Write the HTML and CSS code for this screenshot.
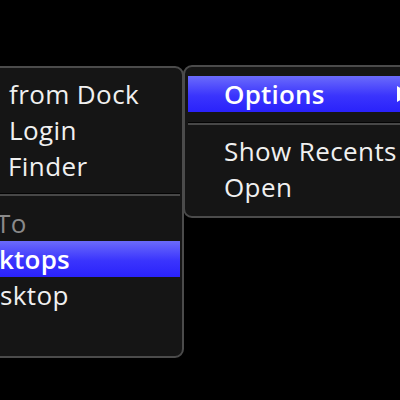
FILE: index.html
```html
<!DOCTYPE html>
<html>
<head>
<meta charset="utf-8">
<link rel="stylesheet" href="styles.css">
</head>
<body>
<div class="stage">
  <div class="menu menu--left">
    <div class="item"><span class="pre">Remove </span><span class="vis vis--pad">from Dock</span></div>
    <div class="item"><span class="pre">Open at </span><span class="vis vis--pad">Login</span></div>
    <div class="item"><span class="pre pre--finder">Show in </span><span class="vis vis--pad">Finder</span></div>
    <div class="sep"></div>
    <div class="item item--header"><span class="pre pre--to">Assign </span><span class="vis">To</span></div>
    <div class="item item--active"><span class="pre pre--all">All Des</span><span class="vis">ktops</span></div>
    <div class="item"><span class="pre pre--this">This De</span><span class="vis">sktop</span></div>
    <div class="item"><span class="pre">None</span></div>
  </div>
  <div class="menu menu--right">
    <div class="item item--active item--sub"><span>Options</span>
      <svg class="arrow" width="14" height="16" viewBox="0 0 14 16"><polygon points="0,0 14,8 0,16" fill="#ffffff"/></svg>
    </div>
    <div class="sep sep--right"></div>
    <div class="item"><span>Show Recents</span></div>
    <div class="item"><span>Open</span></div>
  </div>
</div>
</body>
</html>
```
FILE: styles.css
```css
html, body {
  margin: 0;
  padding: 0;
  background: #000;
  width: 400px;
  height: 400px;
  overflow: hidden;
}
.stage {
  display: flex;
  align-items: flex-start;
  padding-top: 65px;
  font-family: "Open Sans", "DejaVu Sans", sans-serif;
  font-size: 26px;
  line-height: 36px;
  letter-spacing: 0.4px;
  color: #f0f0f0;
}
.menu {
  box-sizing: border-box;
  background: #151515;
  border: 2px solid #4b4b4b;
  border-radius: 9px;
  flex: 0 0 auto;
}
.menu--left {
  margin-left: -220px;
  margin-top: 1px;
  width: 404px;
  padding: 8px 2px 7px 1px;
}
.menu--right {
  position: relative;
  margin-left: -1px;
  width: 250px;
  padding: 9px 3px 11px 3px;
}
.item {
  display: flex;
  height: 36px;
  white-space: pre;
}
.menu--right .item {
  padding-left: 36px;
  padding-right: 17px;
}
.pre {
  flex: 0 0 auto;
  width: 217px;
  text-align: right;
  overflow: hidden;
}
.vis--pad { padding-left: 9px; }
.pre--finder { width: 216px; }
.pre--to { width: 213px; }
.pre--all { width: 216px; }
.pre--this { width: 217px; }
.item--header { color: #8a8a8a; }
.item--active {
  background: linear-gradient(#6b6bfb, #3a34fd 55%, #2a22fb);
  color: #ffffff;
  font-weight: 600;
  letter-spacing: 0.2px;
}
.item--sub { align-items: center; }
.arrow { margin-left: auto; }
.sep {
  height: 2px;
  border-top: 1px solid #030303;
  background: #474747;
  margin: 9px 0 9px;
}
.sep--right {
  margin: 10px 0 8px;
}
```
